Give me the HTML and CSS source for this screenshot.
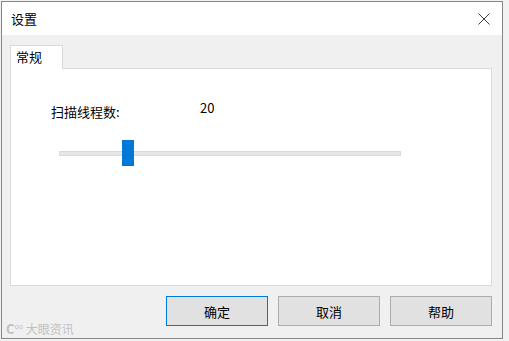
FILE: index.html
```html
<!DOCTYPE html>
<html>
  <head>
    <meta charset="utf-8" />
    <link rel="stylesheet" href="styles.css">
  </head>
  <body>
    <div class="window">
      <div class="titlebar">
        <span class="title">设置</span>
        <svg class="close" width="12" height="12" viewBox="0 0 12 12">
          <path d="M0.5 0.5 L11.5 11.5 M11.5 0.5 L0.5 11.5" stroke="#3c3c3c" stroke-width="1" fill="none" />
        </svg>
      </div>

      <div class="client">
        <div class="tabs">
          <div class="tab">常规</div>
        </div>
        <div class="panel">
          <div class="row">
            <span class="label">扫描线程数:</span>
            <span class="value">20</span>
          </div>
          <div class="slider">
            <div class="track"></div>
            <div class="thumb" style="left: 63px"></div>
          </div>
        </div>

        <div class="buttons">
          <button class="btn default">确定</button>
          <button class="btn">取消</button>
          <button class="btn">帮助</button>
        </div>
      </div>

      <div class="watermark"><span class="wm-logo">C</span><sup>oo</sup> 大眼资讯</div>
    </div>
  </body>
</html>
```

FILE: styles.css
```css
body {
  margin: 0;
  background-color: #f2f2f2;
  font-family: "Noto Sans CJK SC", "Noto Sans", sans-serif;
  font-size: 13px;
  color: #000;
}

.window {
  position: relative;
  box-sizing: border-box;
  width: 502px;
  height: 338px;
  margin: 1px 0 0 1px;
  border: 1px solid #868686;
  background-color: #f0f0f0;
  display: flex;
  flex-direction: column;
}

.titlebar {
  height: 33px;
  background-color: #fff;
  display: flex;
  align-items: center;
  justify-content: space-between;
  padding: 0 12px 0 9px;
}

.title {
  font-size: 13px;
  line-height: 18px;
}

.client {
  flex: 1;
  display: flex;
  flex-direction: column;
  padding: 10px 10px 0 8px;
}

.tabs {
  display: flex;
  position: relative;
  z-index: 1;
  margin-bottom: -1px;
}

.tab {
  box-sizing: border-box;
  width: 53px;
  height: 24px;
  padding-left: 5px;
  line-height: 22px;
  background-color: #fff;
  border: 1px solid #d9d9d9;
  border-bottom: none;
}

.panel {
  box-sizing: border-box;
  height: 218px;
  background-color: #fff;
  border: 1px solid #d9d9d9;
  padding: 34px 0 0 40px;
}

.row {
  display: flex;
  line-height: 18px;
}

.label {
  width: 149px;
}

.value {
  margin-top: -4px;
}

.slider {
  position: relative;
  width: 342px;
  height: 26px;
  margin: 19px 0 0 8px;
  display: flex;
  align-items: center;
}

.track {
  box-sizing: border-box;
  width: 100%;
  height: 5px;
  background-color: #e7e7e7;
  border: 1px solid #dadada;
}

.thumb {
  position: absolute;
  top: 0;
  width: 12px;
  height: 26px;
  background-color: #0078d7;
}

.buttons {
  display: flex;
  justify-content: flex-end;
  gap: 10px;
  margin-top: 10px;
}

.btn {
  box-sizing: border-box;
  width: 102px;
  height: 30px;
  background-color: #e1e1e1;
  border: 1px solid #adadad;
  font-family: "Noto Sans CJK SC", "Noto Sans", sans-serif;
  font-size: 13px;
  color: #000;
  padding: 0;
}

.btn.default {
  border-color: #0078d7;
}

.watermark {
  position: absolute;
  left: 4px;
  bottom: 2px;
  font-size: 12px;
  line-height: 14px;
  color: rgba(170, 170, 170, 0.7);
}

.wm-logo {
  font-weight: bold;
  font-size: 13px;
}

.watermark sup {
  font-size: 7px;
}
```
